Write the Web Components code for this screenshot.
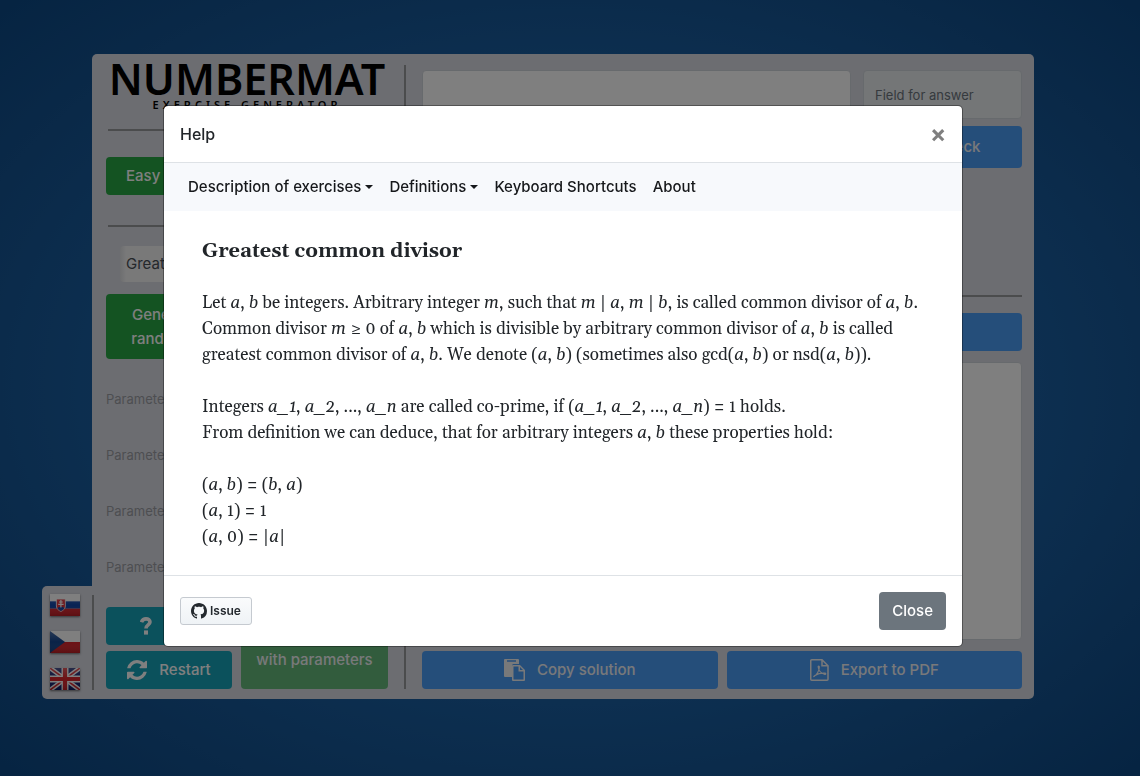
<!DOCTYPE html>
<html lang="en">
<head>
<meta charset="utf-8">
<meta name="viewport" content="width=device-width, initial-scale=1">
<title>Numbermat</title>
<style>
  html { min-height: 100%; background: radial-gradient(ellipse farthest-corner at center, #2474bc 0%, #1c62a6 50%, #145290 80%, #0c4884 100%); }
  body { margin: 0; font: 16px/24px Inter, Roboto, "Liberation Sans", sans-serif; color: #212529; }
</style>
</head>
<body>
<nm-app></nm-app>
<script>
function define(name, html, init) {
  const template = document.createElement('template');
  template.innerHTML = html;
  customElements.define(name, class extends HTMLElement {
    constructor() {
      super();
      this.attachShadow({ mode: 'open' }).append(template.content.cloneNode(true));
    }
    connectedCallback() { if (init) init(this, this.shadowRoot); }
  });
}

/* Icons */
const ICONS = {
  restart: '<svg viewBox="0 0 1536 1536" width="20" height="20"><path fill="currentColor" d="M1511 928q0 5-1 7-64 268-268 434.500T764 1536q-146 0-282.500-55T238 1324l-129 129q-19 19-45 19t-45-19-19-45V960q0-26 19-45t45-19h448q26 0 45 19t19 45-19 45l-137 137q71 66 161 102t187 36q134 0 250-65t186-179q11-17 53-117 8-23 30-23h192q13 0 22.500 9.500t9.500 22.500zm25-800v448q0 26-19 45t-45 19h-448q-26 0-45-19t-19-45 19-45l138-138Q969 256 768 256q-134 0-250 65T332 500q-11 17-53 117-8 23-30 23H50q-13 0-22.500-9.500T18 608v-7q65-268 270-434.500T768 0q146 0 284 55.500T1297 212l130-129q19-19 45-19t45 19 19 45z"/></svg>',
  copy: '<svg viewBox="0 0 21 22" width="21" height="22"><path fill="currentColor" fill-rule="evenodd" d="M1 0h13a1 1 0 0 1 1 1v4H9.500a1.500 1.500 0 0 0-1.500 1.500V18H1a1 1 0 0 1-1-1V1a1 1 0 0 1 1-1zM3 1.300v1.500h9V1.300zM9 6h7l5 5v10a1 1 0 0 1-1 1H9a1 1 0 0 1-1-1V7a1 1 0 0 1 1-1zm.500 1.500v13h10V12.500H14.500v-5zM16 8v3h3z"/></svg>',
  pdf: '<svg viewBox="0 0 19 22" width="19" height="22" fill="none" stroke="currentColor"><path stroke-width="1.500" d="M1.750.75H12l6 6V20.250a1 1 0 0 1-1 1H1.750a1 1 0 0 1-1-1V1.750a1 1 0 0 1 1-1zM12 .75v6h6"/><path stroke-width="1.200" d="M4 17.500c2.500-1.300 5.300-5.500 5.300-9.500 0-1.400-1.300-1.300-1.100 0 .5 3.600 3.300 6.600 6.600 7.300 1.300.2 1.300-1 0-1.100-3.400-.2-7.200.6-9.800 2.200-1 .6-1.600 1.400-1 1.100z"/></svg>',
  github: '<svg viewBox="0 0 16 16" width="16" height="16"><path fill="currentColor" fill-rule="evenodd" d="M8 0C3.580 0 0 3.580 0 8c0 3.540 2.290 6.530 5.470 7.590.4.070.55-.17.55-.38 0-.19-.01-.82-.01-1.490-2.010.37-2.530-.49-2.690-.94-.09-.23-.48-.94-.82-1.130-.28-.15-.68-.52-.01-.53.630-.01 1.080.58 1.230.82.720 1.210 1.870.87 2.330.66.070-.52.28-.87.51-1.070-1.780-.2-3.640-.89-3.640-3.950 0-.87.31-1.590.82-2.150-.08-.2-.36-1.020.08-2.120 0 0 .67-.21 2.200.82.640-.18 1.320-.27 2-.27s1.360.09 2 .27c1.530-1.040 2.200-.82 2.200-.82.440 1.100.16 1.920.08 2.120.510.56.82 1.270.82 2.150 0 3.070-1.870 3.750-3.650 3.950.29.250.54.730.54 1.480 0 1.070-.01 1.930-.01 2.200 0 .21.150.46.550.38A8.010 8.010 0 0 0 16 8c0-4.420-3.580-8-8-8z"/></svg>',
  check: '<svg viewBox="0 0 18 18" width="18" height="18"><path fill="none" stroke="currentColor" stroke-width="3" d="M1.500 9.500l5 5L16.500 4"/></svg>',
  help: '<svg viewBox="0 0 12 18" width="12" height="18"><path fill="none" stroke="currentColor" stroke-width="3.600" d="M1.500 5.200C2.300 2.800 4 1.900 6 1.900c2.300 0 4 1.200 4 3.200 0 2.900-4 2.800-4 6.400"/><path fill="currentColor" d="M4 13.400h4V17.600H4z"/></svg>'
};

const FLAGS = {
  sk: '<path fill="#fff" d="M0 0h30v22H0z"/><path fill="#1246a8" d="M0 7.330h30V14.700H0z"/><path fill="#d8232a" d="M0 14.670h30V22H0z"/><path fill="#e0303a" stroke="#fff" stroke-width=".8" d="M6.400 5h9v7c0 3-2.500 4.500-4.500 5.500-2-1-4.500-2.500-4.500-5.500z"/><path fill="#1246a8" d="M7.500 14.200c1.500-1.800 5.300-1.800 6.800 0-.9 1.400-2.200 2.200-3.400 2.800-1.200-.6-2.500-1.400-3.400-2.800z"/><path stroke="#fff" stroke-width="1.200" d="M10.900 6v7.500M9 8h3.800M8.200 10.300h5.400"/>',
  cs: '<path fill="#fff" d="M0 0h30v11H0z"/><path fill="#d8232a" d="M0 11h30v11H0z"/><path fill="#14458f" d="M0 0l15 11L0 22z"/>',
  en: '<path fill="#14206e" d="M0 0h30v22H0z"/><path stroke="#fff" stroke-width="4.600" d="M0 0l30 22M30 0L0 22"/><path stroke="#d8232a" stroke-width="1.600" d="M0 0l30 22M30 0L0 22"/><path stroke="#fff" stroke-width="7" d="M15 0v22M0 11h30"/><path stroke="#d8232a" stroke-width="4.200" d="M15 0v22M0 11h30"/>'
};

define('nm-icon', `
  <style>:host { display: inline-flex; flex: none; } svg { display: block; }</style>`,
  (host, root) => { if (!root.querySelector('svg')) root.innerHTML += ICONS[host.getAttribute('name')]; });

define('nm-flag', `
  <style>
    :host { display: block; }
    button { display: block; width: 30px; height: 22px; padding: 0; border: 0; background: none; box-shadow: 0 1px 2px rgba(0,0,0,.5); cursor: pointer; }
    svg { display: block; width: 100%; height: 100%; }
  </style>
  <button type="button"></button>`,
  (host, root) => {
    const b = root.querySelector('button');
    b.setAttribute('aria-label', host.getAttribute('label'));
    b.innerHTML = '<svg viewBox="0 0 30 22"><defs><linearGradient id="g" x2="0" y2="1"><stop offset="0" stop-color="#fff" stop-opacity=".25"/><stop offset=".5" stop-color="#fff" stop-opacity="0"/><stop offset="1" stop-opacity=".15"/></linearGradient></defs>'
      + FLAGS[host.getAttribute('lang-code')] + '<path fill="url(#g)" d="M0 0h30v22H0z"/></svg>';
  });

define('nm-button', `
  <style>
    :host { display: flex; --fill: #007bff; }
    :host([kind="success"]) { --fill: #28a745; }
    :host([kind="info"]) { --fill: #17a2b8; }
    :host([kind="secondary"]) { --fill: #6c757d; }
    :host([disabled]) { opacity: .65; }
    button { flex: 1; display: flex; align-items: center; justify-content: center; gap: 12px; min-height: 38px; padding: 6px 13px;
      border: 0; border-radius: 4px; background: var(--fill); color: #fff; font: inherit; font-size: 15px; font-weight: 500; cursor: pointer; }
    :host([wide]) button { padding: 6px 20px; }
  </style>
  <button type="button"><slot name="icon"></slot><slot></slot></button>`,
  (host, root) => {
    const b = root.querySelector('button');
    b.disabled = host.hasAttribute('disabled');
    if (host.hasAttribute('label')) b.setAttribute('aria-label', host.getAttribute('label'));
  });

define('nm-logo', `
  <style>
    :host { display: flex; flex-direction: column; align-items: center; gap: 4px; height: 58px; box-sizing: border-box; color: #000; font-family: "Noto Sans", sans-serif; font-weight: 600; }
    .name { font-size: 43px; line-height: 30px; }
    .tag { font-size: 11px; line-height: 14px; letter-spacing: 4px; }
  </style>
  <div class="name">NUMBERMAT</div>
  <div class="tag">EXERCISE GENERATOR</div>`);

define('nm-settings', `
  <style>
    :host { display: flex; flex-direction: column; }
    hr { width: 278px; max-width: 100%; height: 2px; margin: 0 auto; border: 0; background: #97989b; }
    nm-logo { margin-bottom: 7px; }
    .levels { display: flex; gap: 8px; margin: 26px 0 30px; }
    select { margin: 19px 14px 12px; height: 36px; padding: 0 6px; border: 0; border-radius: 4px; appearance: none;
      background: linear-gradient(90deg, #dcdde0, #f2f2f3 6px); font: inherit; font-size: 15px; color: #495057; }
    .random { width: 118px; height: 65px; }
    .params { display: grid; gap: 32px; margin-top: 28px; font-size: 13px; }
    .params label { display: flex; align-items: center; height: 24px; gap: 12px; color: #9b9da2; }
    .params input { width: 60px; min-width: 0; height: 24px; box-sizing: border-box; border: 0; border-radius: 4px; background: #e9ecef; }
    .actions { display: grid; grid-template-columns: 126px 1fr; grid-template-rows: 38px 38px; column-gap: 9px; row-gap: 6px; margin-top: auto; }
    .actions nm-button:last-child { grid-column: 2; grid-row: 1 / 3; }
  </style>
  <nm-logo></nm-logo>
  <hr>
  <div class="levels"><nm-button kind="success" wide>Easy</nm-button></div>
  <hr>
  <select aria-label="Exercise"><option>Greatest common divisor</option></select>
  <nm-button class="random" kind="success"><span>Generate<br>randomly</span></nm-button>
  <div class="params">
    <label>Parameter A <input disabled></label>
    <label>Parameter B <input disabled></label>
    <label>Parameter C <input disabled></label>
    <label>Parameter D <input disabled></label>
  </div>
  <div class="actions">
    <nm-button kind="info"><nm-icon slot="icon" name="help"></nm-icon>Help</nm-button>
    <nm-button kind="info"><nm-icon slot="icon" name="restart"></nm-icon>Restart</nm-button>
    <nm-button kind="success" disabled><span>Generate<br>with parameters</span></nm-button>
  </div>`);

define('nm-workspace', `
  <style>
    :host { display: flex; flex-direction: column; }
    .top { display: grid; grid-template-columns: 1fr 159px; gap: 12px; height: 208px; }
    .side { display: grid; grid-template-rows: 49px 42px; gap: 7px; align-content: start; }
    textarea, input { box-sizing: border-box; width: 100%; min-width: 0; margin: 0; border: 1px solid #ced4da; border-radius: 4px; padding: 12px 11px; font: inherit; font-size: 13px; resize: none; background: #fff; }
    input { background: #e9ecef; }
    input::placeholder { color: #6c757d; opacity: 1; }
    hr { width: 100%; height: 2px; margin: 17px 0 16px; border: 0; background: #97989b; }
    .notes { flex: 1; margin: 11px 0; }
    .actions { display: grid; grid-template-columns: 1fr 1fr; gap: 9px; }
  </style>
  <div class="top">
    <textarea aria-label="Exercise text"></textarea>
    <div class="side">
      <input aria-label="Answer" placeholder="Field for answer" disabled>
      <nm-button disabled><nm-icon slot="icon" name="check"></nm-icon>Check</nm-button>
    </div>
  </div>
  <hr>
  <nm-button disabled label="Show solution"></nm-button>
  <textarea class="notes" aria-label="Solution"></textarea>
  <div class="actions">
    <nm-button disabled><nm-icon slot="icon" name="copy"></nm-icon>Copy solution</nm-button>
    <nm-button disabled><nm-icon slot="icon" name="pdf"></nm-icon>Export to PDF</nm-button>
  </div>`);

define('nm-languages', `
  <style>
    :host { position: relative; display: flex; flex-direction: column; gap: 15px; padding: 8px 12px 9px 8px; border-radius: 5px 0 0 5px; background: #d8dae2; }
    :host::after { content: ""; position: absolute; left: 100%; top: 9px; bottom: 9px; width: 2px; background: #97989b; }
  </style>
  <nm-flag lang-code="sk" label="Slovensky"></nm-flag>
  <nm-flag lang-code="cs" label="Česky"></nm-flag>
  <nm-flag lang-code="en" label="English"></nm-flag>`);

define('nm-help', `
  <style>
    :host { display: block; box-sizing: border-box; width: 100%; max-width: 800px; border: 1px solid rgba(0,0,0,.35); border-radius: 5px; background: #fff; background-clip: padding-box; }
    header { display: flex; align-items: center; justify-content: space-between; padding: 16px; border-bottom: 1px solid #dee2e6; }
    h5 { margin: 0; font-size: 16px; line-height: 24px; font-weight: 500; }
    .x { width: 16px; height: 24px; padding: 0; border: 0; background: none; color: #7f7f7f; font: 700 24px/24px Inter, sans-serif; cursor: pointer; }
    nav { display: flex; flex-wrap: wrap; padding: 4px 16px; background: #f7f9fc; font-size: 15px; font-weight: 450; }
    nav a { display: flex; align-items: center; padding: 8px; color: #16181b; text-decoration: none; }
    nav a.drop::after { content: ""; margin-left: 4px; border: 4px solid transparent; border-top-color: currentColor; border-bottom: 0; }
    article { padding: 27px 38px 25px; font: 17px/26px Gelasio, Georgia, "Liberation Serif", serif; }
    article h6 { margin: 0; font-size: 20px; line-height: 26px; font-weight: 700; }
    article p { margin: 26px 0 0; }
    footer { display: flex; align-items: center; justify-content: space-between; padding: 16px; border-top: 1px solid #dee2e6; }
    .issue { display: flex; align-items: center; gap: 3px; height: 28px; padding: 0 10px; box-sizing: border-box; border: 1px solid #c5cad0; border-radius: 3px;
      background: linear-gradient(#fafbfc, #eff3f6); color: #24292e; font-size: 12px; font-weight: 600; text-decoration: none; }
  </style>
  <header><h5>Help</h5><button class="x" type="button" aria-label="Close">×</button></header>
  <nav>
    <a class="drop" href="#exercises">Description of exercises</a>
    <a class="drop" href="#definitions">Definitions</a>
    <a href="#shortcuts">Keyboard Shortcuts</a>
    <a href="#about">About</a>
  </nav>
  <article>
    <h6>Greatest common divisor</h6>
    <p>Let <i>a</i>, <i>b</i> be integers. Arbitrary integer <i>m</i>, such that <i>m</i> | <i>a</i>, <i>m</i> | <i>b</i>, is called common divisor of <i>a</i>, <i>b</i>.<br>
    Common divisor <i>m</i> ≥ 0 of <i>a</i>, <i>b</i> which is divisible by arbitrary common divisor of <i>a</i>, <i>b</i> is called<br>
    greatest common divisor of <i>a</i>, <i>b</i>. We denote (<i>a</i>, <i>b</i>) (sometimes also gcd(<i>a</i>, <i>b</i>) or nsd(<i>a</i>, <i>b</i>)).</p>
    <p>Integers <i>a_1</i>, <i>a_2</i>, ..., <i>a_n</i> are called co-prime, if (<i>a_1</i>, <i>a_2</i>, ..., <i>a_n</i>) = 1 holds.<br>
    From definition we can deduce, that for arbitrary integers <i>a</i>, <i>b</i> these properties hold:</p>
    <p>(<i>a</i>, <i>b</i>) = (<i>b</i>, <i>a</i>)<br>(<i>a</i>, 1) = 1<br>(<i>a</i>, 0) = |<i>a</i>|</p>
  </article>
  <footer>
    <a class="issue" href="#issue"><nm-icon name="github"></nm-icon>Issue</a>
    <nm-button kind="secondary">Close</nm-button>
  </footer>`);

define('nm-app', `
  <style>
    :host { display: block; }
    .page { display: flex; align-items: flex-end; padding: 54px 106px 77px 42px; }
    .panel { flex: 1; display: grid; grid-template-columns: 282px 2px minmax(0, 1fr); gap: 16px; box-sizing: border-box; min-height: 645px; padding: 10px 12px 10px 14px;
      border-radius: 5px 5px 5px 0; background: #d8dae2; }
    .rule { background: #97989b; margin-top: 1px; }
    nm-workspace { padding-top: 6px; }
    .backdrop { position: fixed; inset: 0; display: flex; align-items: flex-start; justify-content: center; padding: 105px 14px 0 0; background: rgba(0,0,0,.5); }
  </style>
  <main class="page">
    <nm-languages></nm-languages>
    <section class="panel">
      <nm-settings></nm-settings>
      <div class="rule"></div>
      <nm-workspace></nm-workspace>
    </section>
  </main>
  <div class="backdrop"><nm-help role="dialog" aria-modal="true" aria-label="Help"></nm-help></div>`);
</script>
</body>
</html>
